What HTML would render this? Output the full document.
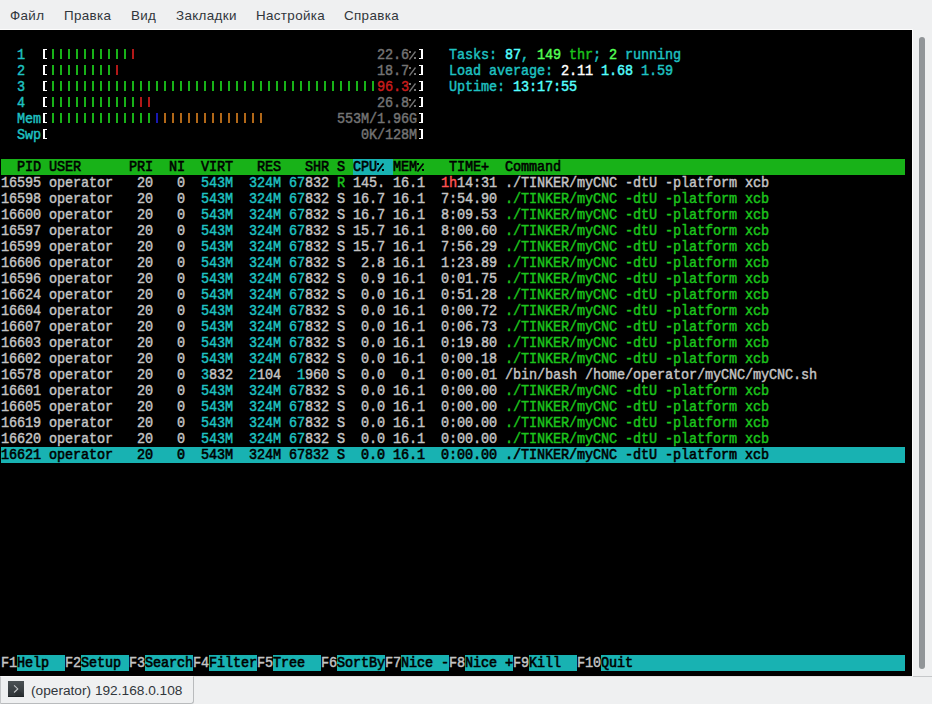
<!DOCTYPE html>
<html><head><meta charset="utf-8"><style>
html,body{margin:0;padding:0}
body{width:932px;height:704px;background:#eff0f1;position:relative;overflow:hidden;font-family:"Liberation Sans",sans-serif}
.m{position:absolute;top:8px;font-size:13.4px;color:#31363b;white-space:nowrap;line-height:16px;letter-spacing:0.35px}
#term{position:absolute;left:0;top:30px;width:912px;height:646px;background:#000;overflow:hidden}
.bg{position:absolute;height:16px}
.bar{position:absolute;width:2px;height:10px}
.r{position:absolute;left:1px;height:16px;line-height:16px;white-space:pre;font-family:"Liberation Mono",monospace;font-size:15px;letter-spacing:-0.1125px;font-weight:normal;-webkit-text-stroke:0.45px currentColor;transform:scaleX(0.9);transform-origin:0 0}
</style></head><body>

<div class="m" style="left:10px">Файл</div>
<div class="m" style="left:64px">Правка</div>
<div class="m" style="left:131px">Вид</div>
<div class="m" style="left:176px">Закладки</div>
<div class="m" style="left:256px">Настройка</div>
<div class="m" style="left:344px">Справка</div>
<div style="position:absolute;left:0;top:29px;width:913px;height:1px;background:#fcfcfc"></div>
<div style="position:absolute;left:912px;top:29px;width:1px;height:647px;background:#fcfcfc"></div>
<div id="term">
<div class="bg" style="left:1px;top:129px;width:904px;background:#18b218"></div>
<div class="bg" style="left:353px;top:129px;width:40px;background:#18b2b2"></div>
<div class="bg" style="left:1px;top:417px;width:904px;background:#18b2b2"></div>
<div class="bg" style="left:17px;top:625px;width:48px;background:#18b2b2"></div>
<div class="bg" style="left:81px;top:625px;width:48px;background:#18b2b2"></div>
<div class="bg" style="left:145px;top:625px;width:48px;background:#18b2b2"></div>
<div class="bg" style="left:209px;top:625px;width:48px;background:#18b2b2"></div>
<div class="bg" style="left:273px;top:625px;width:48px;background:#18b2b2"></div>
<div class="bg" style="left:337px;top:625px;width:48px;background:#18b2b2"></div>
<div class="bg" style="left:401px;top:625px;width:48px;background:#18b2b2"></div>
<div class="bg" style="left:465px;top:625px;width:48px;background:#18b2b2"></div>
<div class="bg" style="left:529px;top:625px;width:48px;background:#18b2b2"></div>
<div class="bg" style="left:601px;top:625px;width:304px;background:#18b2b2"></div>
<div style="position:absolute;left:43px;top:19px;width:2px;height:10px;background:#ffffff"></div>
<div style="position:absolute;left:43px;top:19px;width:4px;height:1px;background:#ffffff"></div>
<div style="position:absolute;left:43px;top:28px;width:4px;height:1px;background:#ffffff"></div>
<div class="bar" style="left:52px;top:19px;background:#18b218"></div>
<div class="bar" style="left:60px;top:19px;background:#18b218"></div>
<div class="bar" style="left:68px;top:19px;background:#18b218"></div>
<div class="bar" style="left:76px;top:19px;background:#18b218"></div>
<div class="bar" style="left:84px;top:19px;background:#18b218"></div>
<div class="bar" style="left:92px;top:19px;background:#18b218"></div>
<div class="bar" style="left:100px;top:19px;background:#18b218"></div>
<div class="bar" style="left:108px;top:19px;background:#18b218"></div>
<div class="bar" style="left:116px;top:19px;background:#18b218"></div>
<div class="bar" style="left:124px;top:19px;background:#18b218"></div>
<div class="bar" style="left:132px;top:19px;background:#b21818"></div>
<div style="position:absolute;left:421px;top:19px;width:2px;height:10px;background:#ffffff"></div>
<div style="position:absolute;left:419px;top:19px;width:4px;height:1px;background:#ffffff"></div>
<div style="position:absolute;left:419px;top:28px;width:4px;height:1px;background:#ffffff"></div>
<div class="r" style="top:18px;color:#c4c4c4">  <span style="color:#1fc2c2">1</span>                                            <span style="color:#747474">22.6 </span>    <span style="color:#1fc2c2">Tasks: </span><span style="color:#54ffff">87</span><span style="color:#1fc2c2">, </span><span style="color:#54ff54">149</span><span style="color:#1cc41c"> thr</span><span style="color:#1fc2c2">; </span><span style="color:#54ff54">2</span><span style="color:#1fc2c2"> running</span></div>
<div style="position:absolute;left:43px;top:35px;width:2px;height:10px;background:#ffffff"></div>
<div style="position:absolute;left:43px;top:35px;width:4px;height:1px;background:#ffffff"></div>
<div style="position:absolute;left:43px;top:44px;width:4px;height:1px;background:#ffffff"></div>
<div class="bar" style="left:52px;top:35px;background:#18b218"></div>
<div class="bar" style="left:60px;top:35px;background:#18b218"></div>
<div class="bar" style="left:68px;top:35px;background:#18b218"></div>
<div class="bar" style="left:76px;top:35px;background:#18b218"></div>
<div class="bar" style="left:84px;top:35px;background:#18b218"></div>
<div class="bar" style="left:92px;top:35px;background:#18b218"></div>
<div class="bar" style="left:100px;top:35px;background:#18b218"></div>
<div class="bar" style="left:108px;top:35px;background:#18b218"></div>
<div class="bar" style="left:116px;top:35px;background:#b21818"></div>
<div style="position:absolute;left:421px;top:35px;width:2px;height:10px;background:#ffffff"></div>
<div style="position:absolute;left:419px;top:35px;width:4px;height:1px;background:#ffffff"></div>
<div style="position:absolute;left:419px;top:44px;width:4px;height:1px;background:#ffffff"></div>
<div class="r" style="top:34px;color:#c4c4c4">  <span style="color:#1fc2c2">2</span>                                            <span style="color:#747474">18.7 </span>    <span style="color:#1fc2c2">Load average: </span><span style="color:#ffffff">2.11 </span><span style="color:#54ffff">1.68 </span><span style="color:#1fc2c2">1.59</span></div>
<div style="position:absolute;left:43px;top:51px;width:2px;height:10px;background:#ffffff"></div>
<div style="position:absolute;left:43px;top:51px;width:4px;height:1px;background:#ffffff"></div>
<div style="position:absolute;left:43px;top:60px;width:4px;height:1px;background:#ffffff"></div>
<div class="bar" style="left:52px;top:51px;background:#18b218"></div>
<div class="bar" style="left:60px;top:51px;background:#18b218"></div>
<div class="bar" style="left:68px;top:51px;background:#18b218"></div>
<div class="bar" style="left:76px;top:51px;background:#18b218"></div>
<div class="bar" style="left:84px;top:51px;background:#18b218"></div>
<div class="bar" style="left:92px;top:51px;background:#18b218"></div>
<div class="bar" style="left:100px;top:51px;background:#18b218"></div>
<div class="bar" style="left:108px;top:51px;background:#18b218"></div>
<div class="bar" style="left:116px;top:51px;background:#18b218"></div>
<div class="bar" style="left:124px;top:51px;background:#18b218"></div>
<div class="bar" style="left:132px;top:51px;background:#18b218"></div>
<div class="bar" style="left:140px;top:51px;background:#18b218"></div>
<div class="bar" style="left:148px;top:51px;background:#18b218"></div>
<div class="bar" style="left:156px;top:51px;background:#18b218"></div>
<div class="bar" style="left:164px;top:51px;background:#18b218"></div>
<div class="bar" style="left:172px;top:51px;background:#18b218"></div>
<div class="bar" style="left:180px;top:51px;background:#18b218"></div>
<div class="bar" style="left:188px;top:51px;background:#18b218"></div>
<div class="bar" style="left:196px;top:51px;background:#18b218"></div>
<div class="bar" style="left:204px;top:51px;background:#18b218"></div>
<div class="bar" style="left:212px;top:51px;background:#18b218"></div>
<div class="bar" style="left:220px;top:51px;background:#18b218"></div>
<div class="bar" style="left:228px;top:51px;background:#18b218"></div>
<div class="bar" style="left:236px;top:51px;background:#18b218"></div>
<div class="bar" style="left:244px;top:51px;background:#18b218"></div>
<div class="bar" style="left:252px;top:51px;background:#18b218"></div>
<div class="bar" style="left:260px;top:51px;background:#18b218"></div>
<div class="bar" style="left:268px;top:51px;background:#18b218"></div>
<div class="bar" style="left:276px;top:51px;background:#18b218"></div>
<div class="bar" style="left:284px;top:51px;background:#18b218"></div>
<div class="bar" style="left:292px;top:51px;background:#18b218"></div>
<div class="bar" style="left:300px;top:51px;background:#18b218"></div>
<div class="bar" style="left:308px;top:51px;background:#18b218"></div>
<div class="bar" style="left:316px;top:51px;background:#18b218"></div>
<div class="bar" style="left:324px;top:51px;background:#18b218"></div>
<div class="bar" style="left:332px;top:51px;background:#18b218"></div>
<div class="bar" style="left:340px;top:51px;background:#18b218"></div>
<div class="bar" style="left:348px;top:51px;background:#18b218"></div>
<div class="bar" style="left:356px;top:51px;background:#18b218"></div>
<div class="bar" style="left:364px;top:51px;background:#18b218"></div>
<div class="bar" style="left:372px;top:51px;background:#18b218"></div>
<div style="position:absolute;left:421px;top:51px;width:2px;height:10px;background:#ffffff"></div>
<div style="position:absolute;left:419px;top:51px;width:4px;height:1px;background:#ffffff"></div>
<div style="position:absolute;left:419px;top:60px;width:4px;height:1px;background:#ffffff"></div>
<div class="r" style="top:50px;color:#c4c4c4">  <span style="color:#1fc2c2">3</span>                                            <span style="color:#c81c1c">96.3</span><span style="color:#747474"> </span>    <span style="color:#1fc2c2">Uptime: </span><span style="color:#54ffff">13:17:55</span></div>
<div style="position:absolute;left:43px;top:67px;width:2px;height:10px;background:#ffffff"></div>
<div style="position:absolute;left:43px;top:67px;width:4px;height:1px;background:#ffffff"></div>
<div style="position:absolute;left:43px;top:76px;width:4px;height:1px;background:#ffffff"></div>
<div class="bar" style="left:52px;top:67px;background:#18b218"></div>
<div class="bar" style="left:60px;top:67px;background:#18b218"></div>
<div class="bar" style="left:68px;top:67px;background:#18b218"></div>
<div class="bar" style="left:76px;top:67px;background:#18b218"></div>
<div class="bar" style="left:84px;top:67px;background:#18b218"></div>
<div class="bar" style="left:92px;top:67px;background:#18b218"></div>
<div class="bar" style="left:100px;top:67px;background:#18b218"></div>
<div class="bar" style="left:108px;top:67px;background:#18b218"></div>
<div class="bar" style="left:116px;top:67px;background:#18b218"></div>
<div class="bar" style="left:124px;top:67px;background:#18b218"></div>
<div class="bar" style="left:132px;top:67px;background:#18b218"></div>
<div class="bar" style="left:140px;top:67px;background:#b21818"></div>
<div class="bar" style="left:148px;top:67px;background:#b21818"></div>
<div style="position:absolute;left:421px;top:67px;width:2px;height:10px;background:#ffffff"></div>
<div style="position:absolute;left:419px;top:67px;width:4px;height:1px;background:#ffffff"></div>
<div style="position:absolute;left:419px;top:76px;width:4px;height:1px;background:#ffffff"></div>
<div class="r" style="top:66px;color:#c4c4c4">  <span style="color:#1fc2c2">4</span>                                            <span style="color:#747474">26.8 </span> </div>
<div style="position:absolute;left:43px;top:83px;width:2px;height:10px;background:#ffffff"></div>
<div style="position:absolute;left:43px;top:83px;width:4px;height:1px;background:#ffffff"></div>
<div style="position:absolute;left:43px;top:92px;width:4px;height:1px;background:#ffffff"></div>
<div class="bar" style="left:52px;top:83px;background:#18b218"></div>
<div class="bar" style="left:60px;top:83px;background:#18b218"></div>
<div class="bar" style="left:68px;top:83px;background:#18b218"></div>
<div class="bar" style="left:76px;top:83px;background:#18b218"></div>
<div class="bar" style="left:84px;top:83px;background:#18b218"></div>
<div class="bar" style="left:92px;top:83px;background:#18b218"></div>
<div class="bar" style="left:100px;top:83px;background:#18b218"></div>
<div class="bar" style="left:108px;top:83px;background:#18b218"></div>
<div class="bar" style="left:116px;top:83px;background:#18b218"></div>
<div class="bar" style="left:124px;top:83px;background:#18b218"></div>
<div class="bar" style="left:132px;top:83px;background:#18b218"></div>
<div class="bar" style="left:140px;top:83px;background:#18b218"></div>
<div class="bar" style="left:148px;top:83px;background:#18b218"></div>
<div class="bar" style="left:156px;top:83px;background:#1818b2"></div>
<div class="bar" style="left:164px;top:83px;background:#b26818"></div>
<div class="bar" style="left:172px;top:83px;background:#b26818"></div>
<div class="bar" style="left:180px;top:83px;background:#b26818"></div>
<div class="bar" style="left:188px;top:83px;background:#b26818"></div>
<div class="bar" style="left:196px;top:83px;background:#b26818"></div>
<div class="bar" style="left:204px;top:83px;background:#b26818"></div>
<div class="bar" style="left:212px;top:83px;background:#b26818"></div>
<div class="bar" style="left:220px;top:83px;background:#b26818"></div>
<div class="bar" style="left:228px;top:83px;background:#b26818"></div>
<div class="bar" style="left:236px;top:83px;background:#b26818"></div>
<div class="bar" style="left:244px;top:83px;background:#b26818"></div>
<div class="bar" style="left:252px;top:83px;background:#b26818"></div>
<div class="bar" style="left:260px;top:83px;background:#b26818"></div>
<div style="position:absolute;left:421px;top:83px;width:2px;height:10px;background:#ffffff"></div>
<div style="position:absolute;left:419px;top:83px;width:4px;height:1px;background:#ffffff"></div>
<div style="position:absolute;left:419px;top:92px;width:4px;height:1px;background:#ffffff"></div>
<div class="r" style="top:82px;color:#c4c4c4">  <span style="color:#1fc2c2">Mem</span>                                     <span style="color:#747474">553M/1.96G</span> </div>
<div style="position:absolute;left:43px;top:99px;width:2px;height:10px;background:#ffffff"></div>
<div style="position:absolute;left:43px;top:99px;width:4px;height:1px;background:#ffffff"></div>
<div style="position:absolute;left:43px;top:108px;width:4px;height:1px;background:#ffffff"></div>
<div style="position:absolute;left:421px;top:99px;width:2px;height:10px;background:#ffffff"></div>
<div style="position:absolute;left:419px;top:99px;width:4px;height:1px;background:#ffffff"></div>
<div style="position:absolute;left:419px;top:108px;width:4px;height:1px;background:#ffffff"></div>
<div class="r" style="top:98px;color:#c4c4c4">  <span style="color:#1fc2c2">Swp</span>                                        <span style="color:#747474">0K/128M</span> </div>
<div class="r" style="top:130px;color:#c4c4c4;-webkit-text-stroke:0.6px currentColor"><span style="color:#000000;-webkit-text-stroke:0.6px currentColor">  PID USER      PRI  NI  VIRT   RES   SHR S CPU  MEM    TIME+  Command</span></div>
<div class="r" style="top:146px;color:#c4c4c4">16595 operator   20   0  <span style="color:#1fc2c2">543M</span>  <span style="color:#1fc2c2">324M</span> <span style="color:#1fc2c2">67</span>832 <span style="color:#1cc41c">R</span> 145. 16.1  <span style="color:#ff5454">1h</span>14:31 ./TINKER/myCNC -dtU -platform xcb</div>
<div class="r" style="top:162px;color:#c4c4c4">16598 operator   20   0  <span style="color:#1fc2c2">543M</span>  <span style="color:#1fc2c2">324M</span> <span style="color:#1fc2c2">67</span>832 S 16.7 16.1  7:54.90 <span style="color:#1cc41c">./TINKER/myCNC -dtU -platform xcb</span></div>
<div class="r" style="top:178px;color:#c4c4c4">16600 operator   20   0  <span style="color:#1fc2c2">543M</span>  <span style="color:#1fc2c2">324M</span> <span style="color:#1fc2c2">67</span>832 S 16.7 16.1  8:09.53 <span style="color:#1cc41c">./TINKER/myCNC -dtU -platform xcb</span></div>
<div class="r" style="top:194px;color:#c4c4c4">16597 operator   20   0  <span style="color:#1fc2c2">543M</span>  <span style="color:#1fc2c2">324M</span> <span style="color:#1fc2c2">67</span>832 S 15.7 16.1  8:00.60 <span style="color:#1cc41c">./TINKER/myCNC -dtU -platform xcb</span></div>
<div class="r" style="top:210px;color:#c4c4c4">16599 operator   20   0  <span style="color:#1fc2c2">543M</span>  <span style="color:#1fc2c2">324M</span> <span style="color:#1fc2c2">67</span>832 S 15.7 16.1  7:56.29 <span style="color:#1cc41c">./TINKER/myCNC -dtU -platform xcb</span></div>
<div class="r" style="top:226px;color:#c4c4c4">16606 operator   20   0  <span style="color:#1fc2c2">543M</span>  <span style="color:#1fc2c2">324M</span> <span style="color:#1fc2c2">67</span>832 S  2.8 16.1  1:23.89 <span style="color:#1cc41c">./TINKER/myCNC -dtU -platform xcb</span></div>
<div class="r" style="top:242px;color:#c4c4c4">16596 operator   20   0  <span style="color:#1fc2c2">543M</span>  <span style="color:#1fc2c2">324M</span> <span style="color:#1fc2c2">67</span>832 S  0.9 16.1  0:01.75 <span style="color:#1cc41c">./TINKER/myCNC -dtU -platform xcb</span></div>
<div class="r" style="top:258px;color:#c4c4c4">16624 operator   20   0  <span style="color:#1fc2c2">543M</span>  <span style="color:#1fc2c2">324M</span> <span style="color:#1fc2c2">67</span>832 S  0.0 16.1  0:51.28 <span style="color:#1cc41c">./TINKER/myCNC -dtU -platform xcb</span></div>
<div class="r" style="top:274px;color:#c4c4c4">16604 operator   20   0  <span style="color:#1fc2c2">543M</span>  <span style="color:#1fc2c2">324M</span> <span style="color:#1fc2c2">67</span>832 S  0.0 16.1  0:00.72 <span style="color:#1cc41c">./TINKER/myCNC -dtU -platform xcb</span></div>
<div class="r" style="top:290px;color:#c4c4c4">16607 operator   20   0  <span style="color:#1fc2c2">543M</span>  <span style="color:#1fc2c2">324M</span> <span style="color:#1fc2c2">67</span>832 S  0.0 16.1  0:06.73 <span style="color:#1cc41c">./TINKER/myCNC -dtU -platform xcb</span></div>
<div class="r" style="top:306px;color:#c4c4c4">16603 operator   20   0  <span style="color:#1fc2c2">543M</span>  <span style="color:#1fc2c2">324M</span> <span style="color:#1fc2c2">67</span>832 S  0.0 16.1  0:19.80 <span style="color:#1cc41c">./TINKER/myCNC -dtU -platform xcb</span></div>
<div class="r" style="top:322px;color:#c4c4c4">16602 operator   20   0  <span style="color:#1fc2c2">543M</span>  <span style="color:#1fc2c2">324M</span> <span style="color:#1fc2c2">67</span>832 S  0.0 16.1  0:00.18 <span style="color:#1cc41c">./TINKER/myCNC -dtU -platform xcb</span></div>
<div class="r" style="top:338px;color:#c4c4c4">16578 operator   20   0  <span style="color:#1fc2c2">3</span>832  <span style="color:#1fc2c2">2</span>104  <span style="color:#1fc2c2">1</span>960 S  0.0  0.1  0:00.01 /bin/bash /home/operator/myCNC/myCNC.sh</div>
<div class="r" style="top:354px;color:#c4c4c4">16601 operator   20   0  <span style="color:#1fc2c2">543M</span>  <span style="color:#1fc2c2">324M</span> <span style="color:#1fc2c2">67</span>832 S  0.0 16.1  0:00.00 <span style="color:#1cc41c">./TINKER/myCNC -dtU -platform xcb</span></div>
<div class="r" style="top:370px;color:#c4c4c4">16605 operator   20   0  <span style="color:#1fc2c2">543M</span>  <span style="color:#1fc2c2">324M</span> <span style="color:#1fc2c2">67</span>832 S  0.0 16.1  0:00.00 <span style="color:#1cc41c">./TINKER/myCNC -dtU -platform xcb</span></div>
<div class="r" style="top:386px;color:#c4c4c4">16619 operator   20   0  <span style="color:#1fc2c2">543M</span>  <span style="color:#1fc2c2">324M</span> <span style="color:#1fc2c2">67</span>832 S  0.0 16.1  0:00.00 <span style="color:#1cc41c">./TINKER/myCNC -dtU -platform xcb</span></div>
<div class="r" style="top:402px;color:#c4c4c4">16620 operator   20   0  <span style="color:#1fc2c2">543M</span>  <span style="color:#1fc2c2">324M</span> <span style="color:#1fc2c2">67</span>832 S  0.0 16.1  0:00.00 <span style="color:#1cc41c">./TINKER/myCNC -dtU -platform xcb</span></div>
<div class="r" style="top:418px;color:#c4c4c4"><span style="color:#000000;-webkit-text-stroke:0.6px currentColor">16621 operator   20   0  543M  324M 67832 S  0.0 16.1  0:00.00 ./TINKER/myCNC -dtU -platform xcb</span></div>
<div class="r" style="top:626px;color:#c4c4c4">F1<span style="color:#000000;-webkit-text-stroke:0.6px currentColor">Help  </span>F2<span style="color:#000000;-webkit-text-stroke:0.6px currentColor">Setup </span>F3<span style="color:#000000;-webkit-text-stroke:0.6px currentColor">Search</span>F4<span style="color:#000000;-webkit-text-stroke:0.6px currentColor">Filter</span>F5<span style="color:#000000;-webkit-text-stroke:0.6px currentColor">Tree  </span>F6<span style="color:#000000;-webkit-text-stroke:0.6px currentColor">SortBy</span>F7<span style="color:#000000;-webkit-text-stroke:0.6px currentColor">Nice -</span>F8<span style="color:#000000;-webkit-text-stroke:0.6px currentColor">Nice +</span>F9<span style="color:#000000;-webkit-text-stroke:0.6px currentColor">Kill  </span>F10<span style="color:#000000;-webkit-text-stroke:0.6px currentColor">Quit</span></div>
<svg width="8" height="16" style="position:absolute;left:409px;top:17px"><rect x="0" y="4" width="2" height="2" fill="#747474"/><rect x="5" y="10" width="2" height="2" fill="#747474"/><path d="M0.5 12.5 L6.5 4.5" stroke="#747474" stroke-width="1.3" fill="none"/></svg>
<svg width="8" height="16" style="position:absolute;left:409px;top:33px"><rect x="0" y="4" width="2" height="2" fill="#747474"/><rect x="5" y="10" width="2" height="2" fill="#747474"/><path d="M0.5 12.5 L6.5 4.5" stroke="#747474" stroke-width="1.3" fill="none"/></svg>
<svg width="8" height="16" style="position:absolute;left:409px;top:49px"><rect x="0" y="4" width="2" height="2" fill="#747474"/><rect x="5" y="10" width="2" height="2" fill="#747474"/><path d="M0.5 12.5 L6.5 4.5" stroke="#747474" stroke-width="1.3" fill="none"/></svg>
<svg width="8" height="16" style="position:absolute;left:409px;top:65px"><rect x="0" y="4" width="2" height="2" fill="#747474"/><rect x="5" y="10" width="2" height="2" fill="#747474"/><path d="M0.5 12.5 L6.5 4.5" stroke="#747474" stroke-width="1.3" fill="none"/></svg>
<svg width="8" height="16" style="position:absolute;left:377px;top:129px"><rect x="0" y="4" width="2" height="2" fill="#000000"/><rect x="5" y="10" width="2" height="2" fill="#000000"/><path d="M0.5 12.5 L6.5 4.5" stroke="#000000" stroke-width="1.6" fill="none"/></svg>
<svg width="8" height="16" style="position:absolute;left:417px;top:129px"><rect x="0" y="4" width="2" height="2" fill="#000000"/><rect x="5" y="10" width="2" height="2" fill="#000000"/><path d="M0.5 12.5 L6.5 4.5" stroke="#000000" stroke-width="1.6" fill="none"/></svg>
</div>
<div style="position:absolute;left:919px;top:37px;width:6px;height:632px;border-radius:3px;background:#919598"></div>
<div style="position:absolute;left:0;top:676px;width:912px;height:1px;background:#e2e3e4"></div><div style="position:absolute;left:913px;top:676px;width:19px;height:1px;background:#c6c8ca"></div>
<div style="position:absolute;left:0;top:676px;width:192px;height:26px;background:#eff0f1;border-right:1px solid #b9bbbd;border-bottom:1px solid #b9bbbd;border-bottom-right-radius:3px;border-top:1px solid #f7f7f8;border-left:1px solid #c4c6c8;box-sizing:content-box"></div>
<svg width="16" height="16" style="position:absolute;left:8px;top:681px"><defs><linearGradient id="ig" x1="0" y1="0" x2="0" y2="1"><stop offset="0" stop-color="#4b5154"/><stop offset="1" stop-color="#2f3437"/></linearGradient></defs><rect x="0" y="0" width="16" height="16" fill="url(#ig)"/><path d="M9.8 7.8 L16 14 L16 16 L8 16 L6 11.5 Z" fill="#000" opacity="0.12"/><rect x="0" y="15" width="16" height="1" fill="#202427"/><path d="M6.1 4.3 L9.8 7.9 L6.1 11.5" fill="none" stroke="#c6c9cb" stroke-width="1.1"/></svg>
<div style="position:absolute;left:31px;top:683px;font-size:13.7px;line-height:16px;color:#31363b;white-space:nowrap">(operator) 192.168.0.108</div>
</body></html>
